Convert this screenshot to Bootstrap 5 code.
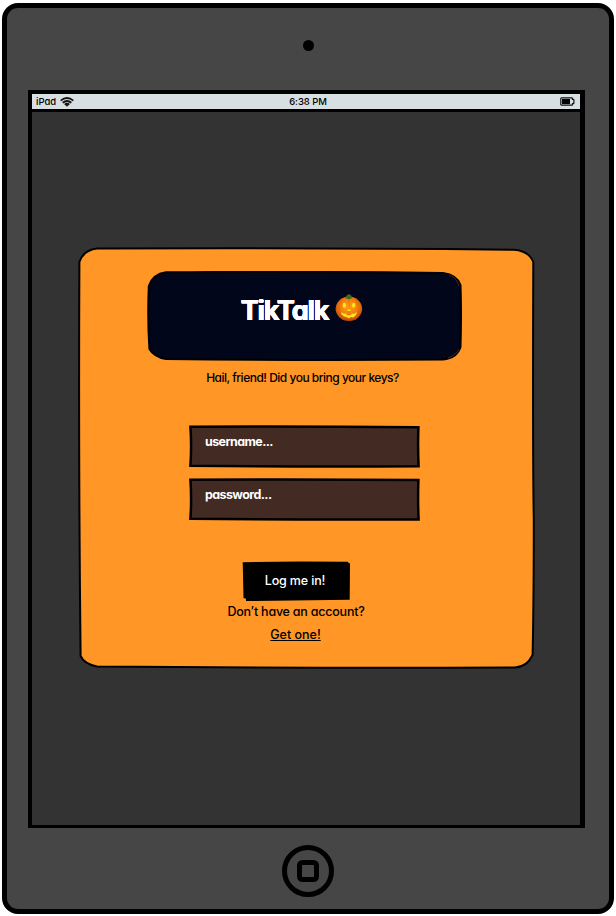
<!DOCTYPE html>
<html lang="en">
<head>
<meta charset="utf-8">
<meta name="viewport" content="width=device-width, initial-scale=1">
<title>TikTalk</title>
<link href="https://cdn.jsdelivr.net/npm/bootstrap@5.3.0/dist/css/bootstrap.min.css" rel="stylesheet">
<style>
body{width:616px;height:916px;background:#fff;overflow:hidden;padding:3px 2px 2px;color:#000;font-family:Inter,"Liberation Sans",sans-serif;font-feature-settings:"cv11";line-height:1}
.device{width:612px;height:911px;background:#464646;border:5px solid #000;border-radius:16px}
.camera{width:11px;height:11px;background:#000;margin:32px 0 0 0}
.screen{width:557px;height:738px;margin:39px 0 0 21px;background:#333;border:solid #000;border-width:4px 5px 3px 4px}
.status{height:18px;background:#d7dfe2;border-bottom:3px solid #000;font-size:9.5px;font-weight:500;padding:0 5px 0 4px}
.status>*{flex:1 1 0}
.clock{margin-left:5px;letter-spacing:-.05px}
.wifi{margin-left:4px}
.panel{width:457px;height:422px;margin:135px 0 0 46px}
.ink{position:absolute;inset:0;z-index:0;width:100%;height:100%}
.banner{width:316px;height:90px;margin:24px 0 0 -6px}
.title{font-size:27px;letter-spacing:-1.1px;color:#fff;text-shadow:.4px 0 #fff,-.4px 0 #fff,0 .4px #fff,0 -.4px #fff;margin-top:24px}
.pumpkin{margin:22px 2px 0 6px}
.t{white-space:nowrap;font-weight:500;position:relative}
h1.title{font-weight:700;line-height:1.2}
.field{width:232px;height:43px;margin-left:-6px}
.field span{font-size:12.5px;font-weight:700;color:#fff;padding:11px 0 0 17.5px;letter-spacing:-.6px}
.login{width:109px;height:41px;background:none;border:0;color:#fff;padding:0 3px 5px 0;margin:40px 0 0 -20px}
.hail{font-size:12px;letter-spacing:-.5px;margin:11px 0 0 -8px}
.f1{margin-top:41px}
.f2{margin-top:10px}
.log,.acct,.get{font-size:12.5px}
.log{letter-spacing:-.15px}
.acct{letter-spacing:-.22px;margin:4px 0 0 -21px}
.get{margin:10px 0 0 -22px}
.home{margin-top:16px}
</style>
<script src="https://cdn.jsdelivr.net/npm/bootstrap@5.3.0/dist/js/bootstrap.bundle.min.js"></script>
</head>
<body>
<main class="device d-flex flex-column">
  <div class="camera rounded-circle align-self-center"></div>
  <section class="screen d-flex flex-column flex-shrink-0">
    <header class="status d-flex align-items-center flex-shrink-0">
      <div class="d-flex align-items-center"><span>iPad</span>
        <svg class="wifi" width="14" height="10" viewBox="0 0 14 10" fill="none" stroke="#111" stroke-width="1.8"><path d="M.7 3.6Q7-1.6 13.3 3.6M2.7 5.8Q7 2.2 11.3 5.8M4.7 7.6Q7 5.8 9.3 7.6"/><path d="M5.4 8 7 9.8 8.6 8Q7 7 5.4 8Z" fill="#111" stroke="none"/></svg>
      </div>
      <div class="text-center"><span class="clock">6:38 PM</span></div>
      <div class="d-flex justify-content-end"><svg width="15" height="9" viewBox="0 0 15 9"><path d="M1.5.9h10.3q.7 0 .7.7v.8h.8q.6 0 .6.6v3q0 .6-.6.6h-.8v.8q0 .7-.7.7H1.5q-.7 0-.7-.7V1.6q0-.7.7-.7Z" fill="none" stroke="#111" stroke-width="1.2"/><path d="M2 2h8v5H2z" fill="#000"/></svg></div>
    </header>
    <div class="panel position-relative d-flex flex-column align-items-center flex-shrink-0">
      <svg class="ink" viewBox="78 247 457 422"><path d="M97 248.6Q300 247.6 514 249.8Q529 251 533.3 262Q532.6 460 533.8 520Q533.8 600 532.6 655Q527 667 515 667.4Q300 668.2 97 666.4Q84 664 80.6 656Q78.4 460 79.4 262Q83 250.5 97 248.6Z" fill="#ff9626" stroke="#000" stroke-width="2"/></svg>
      <div class="banner position-relative d-flex justify-content-center flex-shrink-0">
        <svg class="ink" viewBox="146 271 316 90"><path d="M166 272.3Q300 271.2 443 273Q457 275 460.5 285Q461.5 315 460.5 347Q457 358 443 359.6Q300 360.6 166 359Q154 357 149.4 349Q147.4 318 148.8 286Q153 274 166 272.3Z" fill="#02061a" stroke="#000" stroke-width="2"/><path d="M449 275Q457 278 459 286M459 349Q456 355 448 358" fill="none" stroke="#8a501b" stroke-width=".5"/></svg>
        <h1 class="title t mb-0">TikTalk</h1>
        <svg class="pumpkin position-relative" width="30" height="29" viewBox="335 293 30 29"><defs><radialGradient id="pk" cx=".5" cy=".42" r=".6"><stop offset="0" stop-color="#ffa414"/><stop offset=".6" stop-color="#ee7c0c"/><stop offset="1" stop-color="#b83d08"/></radialGradient></defs><ellipse cx="349.9" cy="308.8" rx="13.3" ry="12.2" fill="url(#pk)"/><path d="M344 298Q337 308 344 320M350 298v22M356 298Q363 308 356 320" fill="none" stroke="#d95e09" stroke-width=".8" opacity=".7"/><path d="M346.5 298.3Q347 295 349.5 294.3Q352.8 294 352.7 298.2Q350 300 346.5 298.3Z" fill="#47691c"/><g fill="#ffe81f"><ellipse cx="345.3" cy="305.2" rx="1.6" ry="2.5"/><ellipse cx="354.7" cy="305.2" rx="1.6" ry="2.5"/><path d="M350 308.4 351.6 311H348.4ZM341.8 312.2 345 313.8 347 313.6 347.8 315.2H352L352.8 313.7 355 313.8 358.2 312.2Q356.5 316.6 353.5 317.6L352 316.8 350 318.2 347.5 316.9Q343 316.6 341.8 312.2Z"/></g></svg>
      </div>
      <p class="hail t mb-0">Hail, friend! Did you bring your keys?</p>
      <div class="field f1 position-relative flex-shrink-0"><svg class="ink" viewBox="188 425 232 43"><path d="M190.4 426.7Q300 426 418.4 427.3Q417.7 447 418.6 466.3Q300 467 190.4 465.8Q191.8 446 190.4 426.7Z" fill="#432a22" stroke="#000" stroke-width="2.5"/></svg><span class="t d-block">username...</span></div>
      <div class="field f2 position-relative flex-shrink-0"><svg class="ink" viewBox="188 478 232 43"><path d="M190.4 479.7Q300 479 418.4 480Q417.7 500 418.6 519.4Q300 520 190.4 518.8Q191.8 499 190.4 479.7Z" fill="#432a22" stroke="#000" stroke-width="2.5"/></svg><span class="t d-block">password...</span></div>
      <button class="login position-relative flex-shrink-0" type="button"><svg class="ink" viewBox="242 561 109 41"><path d="M242.7 562.2 300 561.5 348 561.8 348.7 563.2H350L349.7 599.8 246 601V598.8L243.5 598Z"/></svg><span class="log t">Log me in!</span></button>
      <p class="acct t mb-0">Don’t have an account?</p>
      <a class="get t text-black" href="#">Get one!</a>
    </div>
  </section>
  <svg class="home align-self-center flex-shrink-0" width="54" height="54" viewBox="0 0 54 54" fill="none" stroke="#000" stroke-width="5"><circle cx="27" cy="27" r="23.5"/><rect x="18.5" y="18.5" width="17" height="17" rx="3"/></svg>
</main>
</body>
</html>
